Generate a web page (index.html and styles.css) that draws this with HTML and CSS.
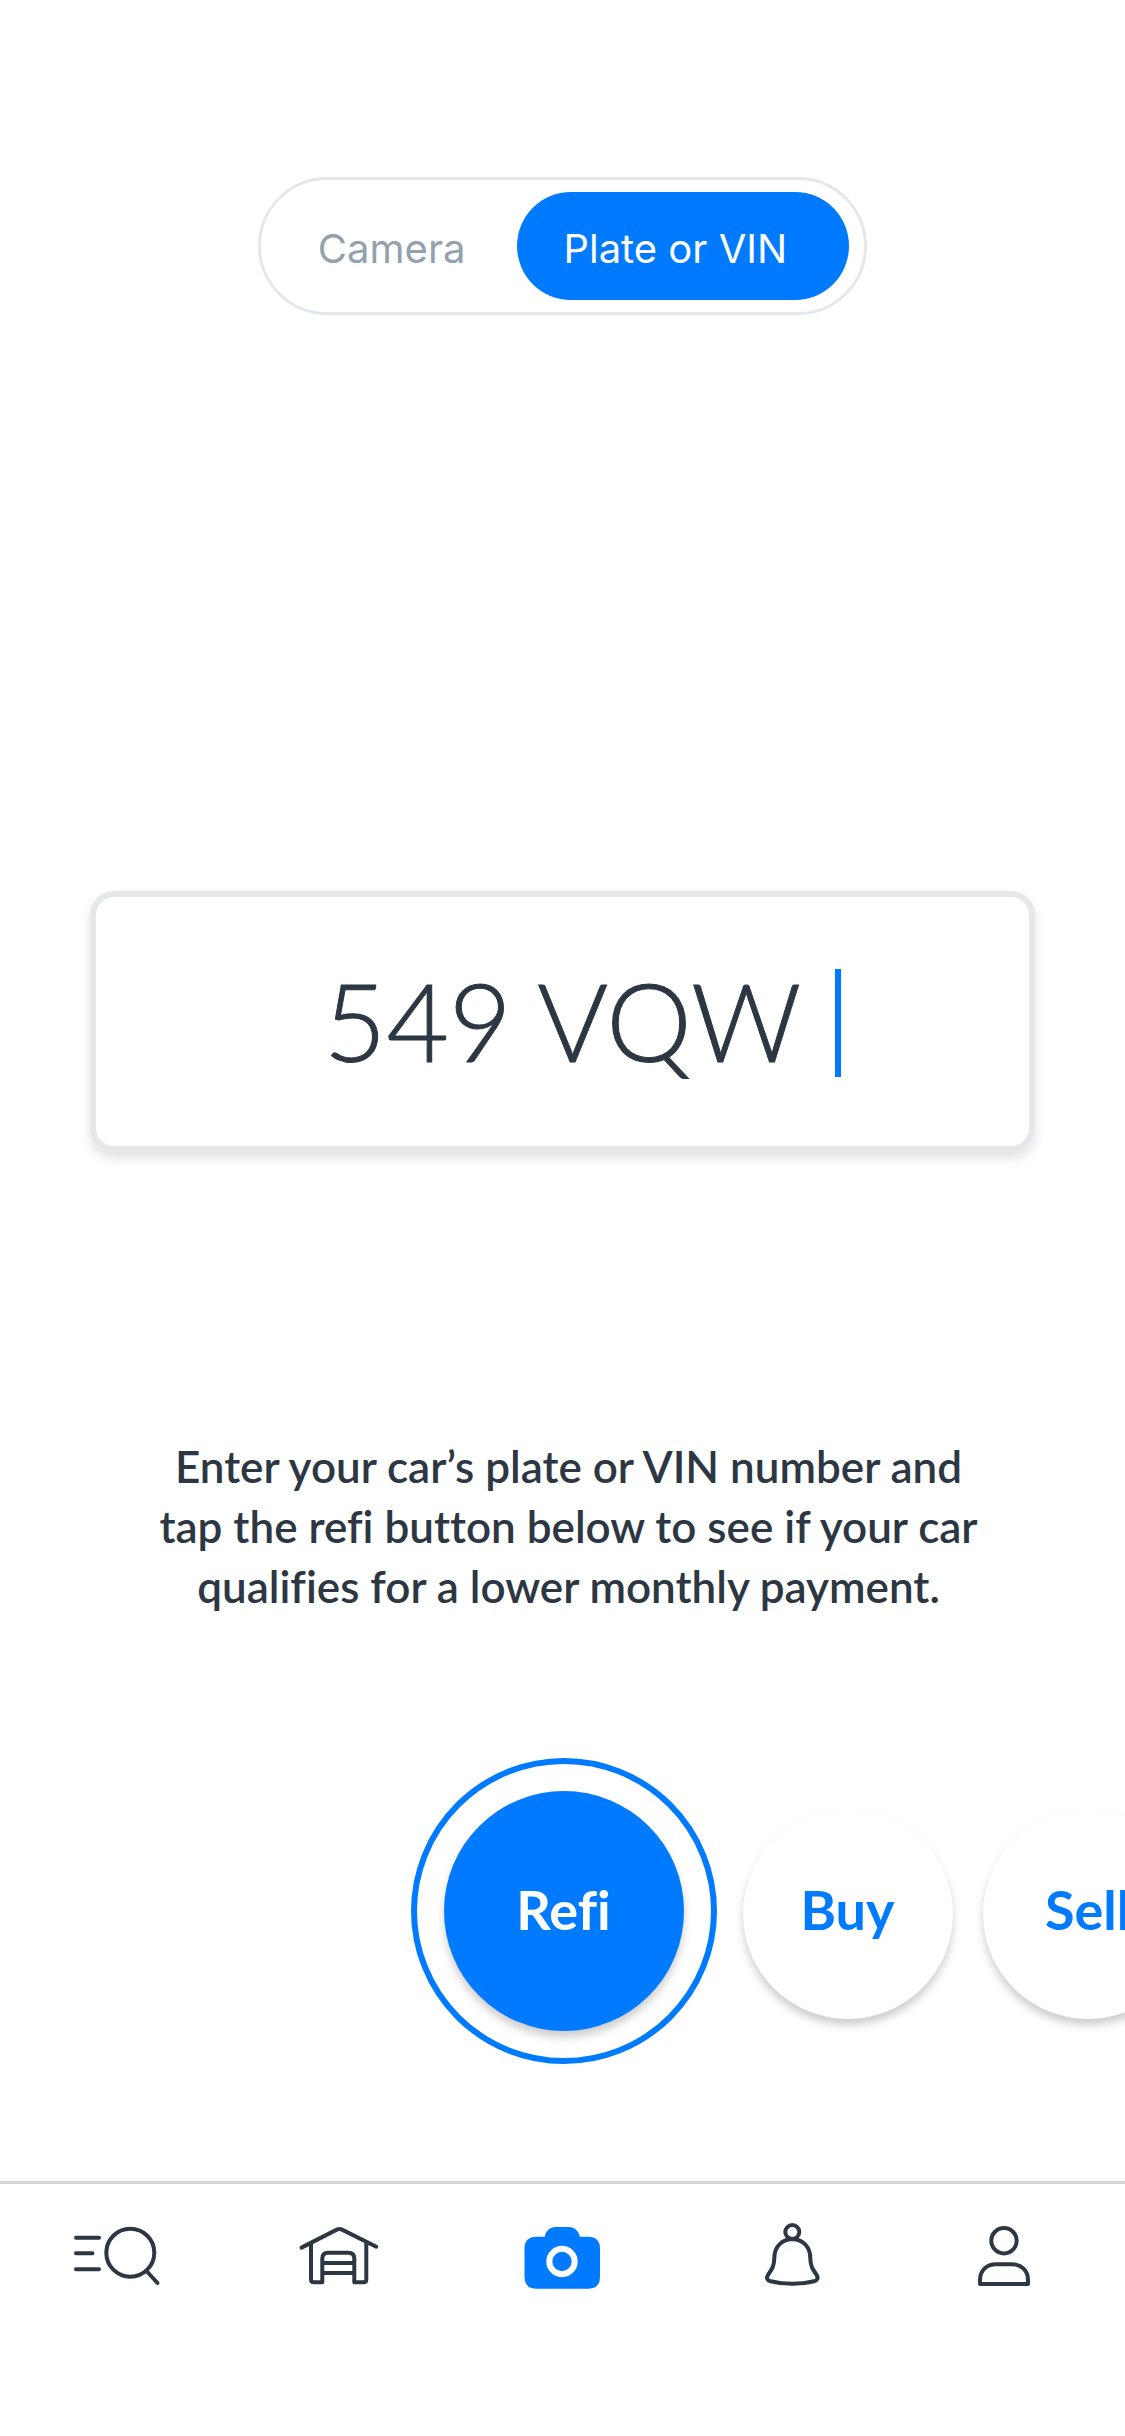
FILE: index.html
```html
<!DOCTYPE html>
<html lang="en">
<head>
<meta charset="utf-8">
<meta name="viewport" content="width=device-width, initial-scale=1">
<title>Plate or VIN</title>
<link rel="stylesheet" href="styles.css">
</head>
<body>
<div class="screen">
  <header class="top">
    <div class="toggle" role="group" aria-label="Entry mode">
      <button class="toggle-option" type="button" aria-pressed="false">Camera</button>
      <button class="toggle-option is-active" type="button" aria-pressed="true">Plate or VIN</button>
    </div>
  </header>
  <main class="content">
    <div class="plate">
      <input class="plate-input" type="text" value="549 VQW" size="7" aria-label="Plate or VIN number">
      <span class="caret"></span>
    </div>
    <p class="hint">Enter your car’s plate or VIN number and<br>tap the refi button below to see if your car<br>qualifies for a lower monthly payment.</p>
    <div class="actions">
      <div class="ring"><button class="action is-primary" type="button">Refi</button></div>
      <button class="action is-secondary" type="button">Buy</button>
      <button class="action is-secondary" type="button">Sell</button>
    </div>
  </main>
  <nav class="tabs" aria-label="Main">
    <a class="tab" href="#search" aria-label="Search">
      <svg class="icon" viewBox="0 0 96 72"><path d="M7 17.7H30M7 33.3H23.500M7 49.3H30M77.5 51L88.5 63"/><circle cx="61.3" cy="32.7" r="24"/></svg>
    </a>
    <a class="tab" href="#garage" aria-label="Garage">
      <svg class="icon" viewBox="0 0 96 72"><path d="M10.5 27.6L46.3 9.4Q48.4 8.4 50.5 9.4L85.3 26.700M20 23V59.5Q20 62.3 22.8 62.3H31.3V38.5Q31.3 32.7 37.1 32.7H57.5Q63.3 32.7 63.3 38.5V62.3H72.5Q75.3 62.3 75.3 59.5V23M31.3 43H63.3M31.3 53H63.3"/></svg>
    </a>
    <a class="tab is-current" href="#camera" aria-label="Camera" aria-current="page">
      <svg class="icon" viewBox="0 0 96 72"><path class="solid" d="M23.5 16.7H31.7C32.6 11 37 7 42.500 7H56C61.500 7 65.900 11 66.800 16.7H75Q87 16.7 87 28.7V56.7Q87 68.7 75 68.7H23.5Q11.5 68.7 11.5 56.7V28.7Q11.5 16.7 23.5 16.7Z"/><circle class="lens" cx="49" cy="41.5" r="12.7"/></svg>
    </a>
    <a class="tab" href="#alerts" aria-label="Alerts">
      <svg class="icon" viewBox="0 0 96 72"><circle cx="58.3" cy="12" r="7"/><path d="M58.3 19C47 19.5 40.3 27.5 40.3 38C40.3 46 37.8 49.5 34.2 54.6C32 58 33 60.3 36.5 61.2C50 64.5 66.6 64.5 80.1 61.2C83.6 60.3 84.6 58 82.4 54.6C78.8 49.5 76.3 46 76.3 38C76.3 27.5 69.6 19.5 58.3 19Z"/></svg>
    </a>
    <a class="tab" href="#profile" aria-label="Profile">
      <svg class="icon" viewBox="0 0 96 72"><circle cx="48" cy="20.7" r="12.7"/><path d="M24 64V60C24 50.5 30.5 44.3 40 44.3H56C65.500 44.3 72 50.5 72 60V64Z"/></svg>
    </a>
  </nav>
</div>
</body>
</html>
```
FILE: styles.css
```css
:root {
  --blue: #007aff;
  --ink: #2c3743;
  --line: #e4e8eb;
}

* { box-sizing: border-box; }

body {
  margin: 0;
  background: #fff;
  color: var(--ink);
  font-family: Lato, "Open Sans", sans-serif;
  font-variant-ligatures: none;
}

button, input {
  margin: 0;
  padding: 0;
  border: 0;
  background: none;
  color: inherit;
  font: inherit;
  font-variant-ligatures: none;
}

.screen {
  display: flex;
  flex-direction: column;
  min-height: 100vh;
  overflow: hidden;
}

.top {
  display: flex;
  justify-content: center;
  padding-top: 177px;
}

.toggle {
  display: flex;
  padding: 12px 15px;
  border: 3px solid var(--line);
  border-radius: 69px;
}

.toggle-option {
  height: 108px;
  padding: 6px 52px 0 42px;
  border-radius: 54px;
  color: #93a1ad;
  font: 400 40px/60px Inter, sans-serif;
}

.toggle-option.is-active {
  padding: 6px 62px 0 46px;
  background: var(--blue);
  color: #fff;
}

.content {
  display: flex;
  flex-direction: column;
  padding-top: 576px;
}

.plate {
  display: grid;
  grid-template-columns: 1fr auto 1fr;
  align-items: center;
  margin: 0 90px;
  padding: 66px 0 63px;
  border: 6px solid var(--line);
  border-radius: 24px;
  box-shadow: 0 6px 12px rgba(0, 0, 0, 0.12);
}

.plate-input {
  grid-column: 2;
  field-sizing: content;
  height: 120px;
  padding-bottom: 6px;
  font-size: 108px;
  font-weight: 300;
  line-height: 114px;
  outline: 0;
  -webkit-text-stroke: 1px currentColor;
}

.caret {
  width: 6px;
  height: 108px;
  margin-left: 34px;
  background: var(--blue);
}

.hint {
  margin: 284px 0 0;
  padding-left: 12px;
  font-size: 44px;
  font-weight: 600;
  line-height: 60px;
  text-align: center;
}

.actions {
  display: flex;
  align-items: center;
  gap: 30px;
  margin-top: 142px;
  padding-left: calc(50% - 152px);
}

.ring {
  display: flex;
  flex: none;
  align-items: center;
  justify-content: center;
  width: 306px;
  height: 306px;
  margin-right: -4px;
  border: 6px solid var(--blue);
  border-radius: 50%;
}

.action {
  flex: none;
  width: 210px;
  height: 210px;
  padding-bottom: 4px;
  border-radius: 50%;
  background: #fff;
  box-shadow: 0 6px 8px rgba(0, 0, 0, 0.2);
  color: var(--blue);
  font-size: 54px;
  font-weight: 700;
}

.action.is-primary {
  width: 240px;
  height: 240px;
  background: var(--blue);
  color: #fff;
}

.action.is-secondary {
  margin-top: 6px;
  padding-bottom: 10px;
}

.tabs {
  display: flex;
  justify-content: space-between;
  margin-top: auto;
  padding: 36px 73px 144px 69px;
  border-top: 3px solid #d6d6d6;
}

.tab {
  display: block;
  color: var(--ink);
}

.tab.is-current { color: var(--blue); }

.icon {
  display: block;
  width: 96px;
  height: 72px;
  fill: none;
  stroke: currentColor;
  stroke-width: 4;
  stroke-linecap: round;
  stroke-linejoin: round;
}

.icon .solid {
  fill: currentColor;
  stroke: none;
}

.icon .lens {
  stroke: #fff;
  stroke-width: 6;
}
```
